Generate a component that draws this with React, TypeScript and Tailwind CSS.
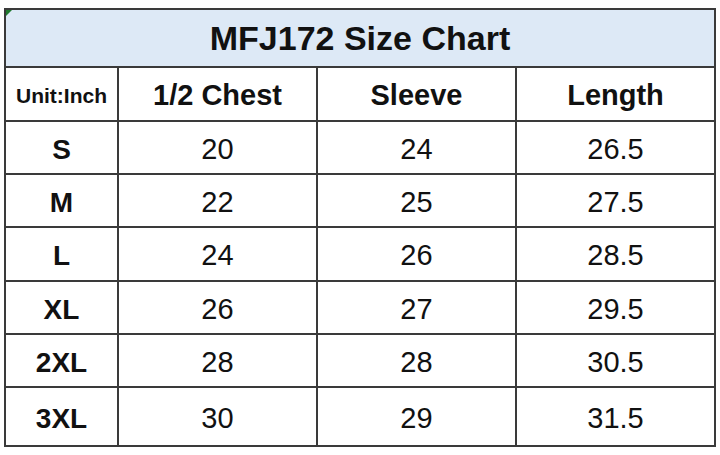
import React from "react";

const rows = [
  ["S", "20", "24", "26.5"],
  ["M", "22", "25", "27.5"],
  ["L", "24", "26", "28.5"],
  ["XL", "26", "27", "29.5"],
  ["2XL", "28", "28", "30.5"],
  ["3XL", "30", "29", "31.5"],
];

export default function App() {
  return (
    <div
      className="w-[720px] h-[455px] bg-white pt-[8px] pl-[4px]"
      style={{ fontFamily: '"Liberation Sans", Arial, sans-serif' }}
    >
      <div className="relative w-[712px] border-2 border-[#3a3a3a] text-[#111]">
        <div className="absolute left-0 top-0 w-0 h-0 border-t-[6px] border-r-[6px] border-t-[#1f7a2e] border-r-transparent" />
        <div className="h-[58px] bg-[#dde9f6] flex items-center justify-center text-[34px] font-bold border-b-2 border-[#3a3a3a]">
          MFJ172 Size Chart
        </div>
        <div className="grid grid-cols-[113px_199px_199px_1fr]">
          <div className="h-[54px] pt-[4px] flex items-center justify-center text-[21px] font-bold border-r-2 border-b-2 border-[#3a3a3a]">
            Unit:Inch
          </div>
          <div className="h-[54px] pt-[4px] flex items-center justify-center text-[29px] font-bold border-r-2 border-b-2 border-[#3a3a3a]">
            1/2 Chest
          </div>
          <div className="h-[54px] pt-[4px] flex items-center justify-center text-[29px] font-bold border-r-2 border-b-2 border-[#3a3a3a]">
            Sleeve
          </div>
          <div className="h-[54px] pt-[4px] flex items-center justify-center text-[29px] font-bold border-b-2 border-[#3a3a3a]">
            Length
          </div>
          {rows.map((r, i) => {
            const last = i === rows.length - 1;
            const h = last ? "h-[57px]" : i === 2 ? "h-[54px] border-b-2" : "h-[53px] border-b-2";
            return (
              <React.Fragment key={r[0]}>
                <div className={`${h} pt-[4px] flex items-center justify-center text-[28px] font-bold border-r-2 border-[#3a3a3a]`}>
                  {r[0]}
                </div>
                <div className={`${h} pt-[4px] flex items-center justify-center text-[29px] border-r-2 border-[#3a3a3a]`}>
                  {r[1]}
                </div>
                <div className={`${h} pt-[4px] flex items-center justify-center text-[29px] border-r-2 border-[#3a3a3a]`}>
                  {r[2]}
                </div>
                <div className={`${h} pt-[4px] flex items-center justify-center text-[29px] border-[#3a3a3a]`}>
                  {r[3]}
                </div>
              </React.Fragment>
            );
          })}
        </div>
      </div>
    </div>
  );
}
